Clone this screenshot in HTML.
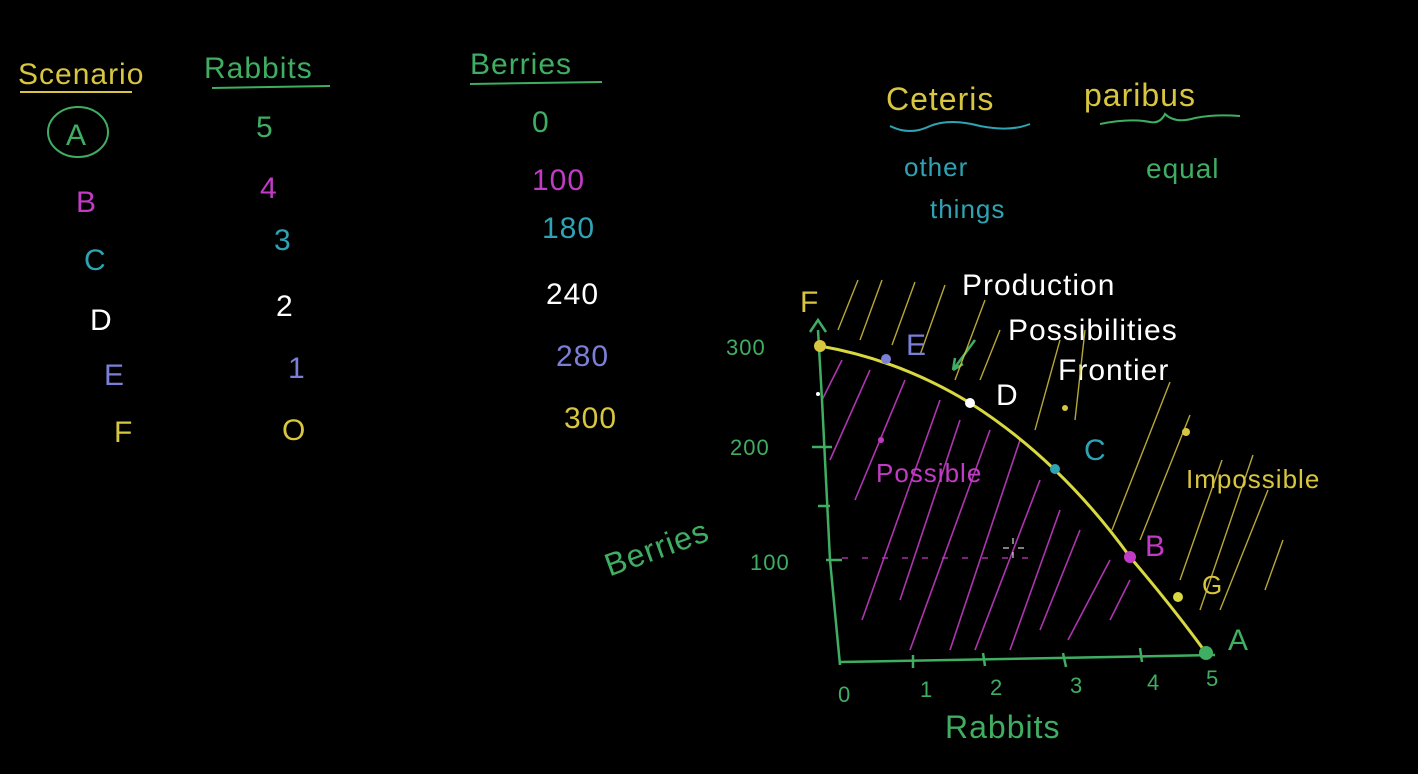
<!DOCTYPE html>
<html><head><meta charset="utf-8"><style>
html,body{margin:0;padding:0;background:#000;width:1418px;height:774px;overflow:hidden}
text{font-family:"Liberation Sans",sans-serif;letter-spacing:1px}
</style></head><body>
<svg width="1418" height="774" viewBox="0 0 1418 774" xmlns="http://www.w3.org/2000/svg">
<rect width="1418" height="774" fill="#000"/>
<g font-size="30">
<text x="18" y="84" fill="#d8c640">Scenario</text>
<line x1="20" y1="92" x2="132" y2="92" stroke="#d8c640" stroke-width="2"/>
<text x="204" y="78" fill="#3fae62">Rabbits</text>
<line x1="212" y1="88" x2="330" y2="86" stroke="#3fae62" stroke-width="2"/>
<text x="470" y="74" fill="#3fae62">Berries</text>
<line x1="470" y1="84" x2="602" y2="82" stroke="#3fae62" stroke-width="2"/>
<ellipse cx="78" cy="132" rx="30" ry="25" fill="none" stroke="#3fae62" stroke-width="2"/>
<text x="66" y="145" fill="#3fae62">A</text>
<text x="256" y="137" fill="#3fae62">5</text>
<text x="532" y="132" fill="#3fae62">0</text>
<text x="76" y="212" fill="#c23bc4">B</text>
<text x="260" y="198" fill="#c23bc4">4</text>
<text x="532" y="190" fill="#c23bc4">100</text>
<text x="84" y="270" fill="#2fa3b3">C</text>
<text x="274" y="250" fill="#2fa3b3">3</text>
<text x="542" y="238" fill="#2fa3b3">180</text>
<text x="90" y="330" fill="#fff">D</text>
<text x="276" y="316" fill="#fff">2</text>
<text x="546" y="304" fill="#fff">240</text>
<text x="104" y="385" fill="#7b7fd6">E</text>
<text x="288" y="378" fill="#7b7fd6">1</text>
<text x="556" y="366" fill="#7b7fd6">280</text>
<text x="114" y="442" fill="#d8c640">F</text>
<text x="282" y="440" fill="#d8c640">O</text>
<text x="564" y="428" fill="#d8c640">300</text>
<text x="886" y="110" fill="#d8c640" font-size="32">Ceteris</text>
<path d="M890 126 q20 10 40 0 q20 -8 50 0 q30 6 50 -2" stroke="#2fa3b3" stroke-width="2" fill="none"/>
<text x="1084" y="106" fill="#d8c640" font-size="32">paribus</text>
<path d="M1100 124 q30 -6 50 -2 q10 2 15 -8 q10 10 30 4 q20 -4 45 -2" stroke="#3fae62" stroke-width="2" fill="none"/>
<text x="904" y="176" fill="#2fa3b3" font-size="26">other</text>
<text x="930" y="218" fill="#2fa3b3" font-size="26">things</text>
<text x="1146" y="178" fill="#3fae62" font-size="28">equal</text>
<text x="962" y="295" fill="#fff">Production</text>
<text x="1008" y="340" fill="#fff">Possibilities</text>
<text x="1058" y="380" fill="#fff">Frontier</text>
<path d="M975 340 l-22 30 M953 370 l2 -12 M953 370 l10 -6" stroke="#3fae62" stroke-width="2.5" fill="none"/>
</g>
<g stroke="#c23bc4" stroke-width="1.6" opacity="0.9">
<line x1="842" y1="360" x2="822" y2="400"/><line x1="870" y1="370" x2="830" y2="460"/>
<line x1="905" y1="380" x2="855" y2="500"/><line x1="940" y1="400" x2="862" y2="620"/>
<line x1="960" y1="420" x2="900" y2="600"/><line x1="990" y1="430" x2="910" y2="650"/>
<line x1="1020" y1="440" x2="950" y2="650"/><line x1="1040" y1="480" x2="975" y2="650"/>
<line x1="1060" y1="510" x2="1010" y2="650"/><line x1="1080" y1="530" x2="1040" y2="630"/>
<line x1="1110" y1="560" x2="1068" y2="640"/><line x1="1130" y1="580" x2="1110" y2="620"/>
</g>
<g stroke="#d8c640" stroke-width="1.4" opacity="0.85">
<line x1="858" y1="280" x2="838" y2="330"/><line x1="882" y1="280" x2="860" y2="340"/>
<line x1="915" y1="282" x2="892" y2="345"/><line x1="945" y1="285" x2="920" y2="355"/>
<line x1="985" y1="300" x2="955" y2="380"/><line x1="1000" y1="330" x2="980" y2="380"/>
<line x1="1060" y1="340" x2="1035" y2="430"/><line x1="1085" y1="330" x2="1075" y2="420"/>
<line x1="1170" y1="382" x2="1112" y2="530"/><line x1="1190" y1="415" x2="1140" y2="540"/>
<line x1="1222" y1="460" x2="1180" y2="580"/><line x1="1253" y1="455" x2="1200" y2="610"/>
<line x1="1268" y1="490" x2="1220" y2="610"/><line x1="1283" y1="540" x2="1265" y2="590"/>
</g>
<g stroke="#3fae62" stroke-width="2.5" fill="none">
<path d="M818 330 L822 400 L830 560 L840 665"/>
<path d="M810 332 L818 320 L826 332"/>
<path d="M840 662 L1215 655"/>
<line x1="812" y1="447" x2="832" y2="447"/><line x1="818" y1="506" x2="830" y2="506"/>
<line x1="826" y1="560" x2="842" y2="560"/>
<line x1="913" y1="655" x2="913" y2="668"/><line x1="983" y1="653" x2="985" y2="666"/>
<line x1="1063" y1="653" x2="1066" y2="667"/><line x1="1140" y1="648" x2="1142" y2="662"/>
</g>
<line x1="842" y1="558" x2="1030" y2="558" stroke="#c23bc4" stroke-width="1.2" stroke-dasharray="6 14"/>
<g fill="#3fae62" font-size="22">
<text x="726" y="355">300</text><text x="730" y="455">200</text><text x="750" y="570">100</text>
<text x="838" y="702">0</text><text x="920" y="697">1</text><text x="990" y="695">2</text>
<text x="1070" y="693">3</text><text x="1147" y="690">4</text><text x="1206" y="686">5</text>
<text x="596" y="560" font-size="32" transform="rotate(-20 650 530)">Berries</text>
<text x="945" y="738" font-size="32">Rabbits</text>
</g>
<path d="M820 346 Q900 360 970 403 Q1060 460 1130 557 Q1175 610 1206 653" stroke="#d8d840" stroke-width="3" fill="none"/>
<circle cx="820" cy="346" r="6" fill="#d8c640"/>
<circle cx="886" cy="359" r="5" fill="#7b7fd6"/>
<circle cx="970" cy="403" r="5" fill="#fff"/>
<circle cx="1055" cy="469" r="5" fill="#2fa3b3"/>
<circle cx="1130" cy="557" r="6" fill="#c23bc4"/>
<circle cx="1178" cy="597" r="5" fill="#d8d840"/>
<circle cx="1206" cy="653" r="7" fill="#3fae62"/>
<circle cx="881" cy="440" r="3" fill="#c23bc4"/>
<circle cx="1065" cy="408" r="3" fill="#d8c640"/>
<circle cx="1186" cy="432" r="4" fill="#d8c640"/>
<circle cx="818" cy="394" r="2" fill="#fff"/>
<g font-size="30">
<text x="800" y="312" fill="#d8c640">F</text>
<text x="906" y="355" fill="#7b7fd6">E</text>
<text x="996" y="405" fill="#fff">D</text>
<text x="1084" y="460" fill="#2fa3b3">C</text>
<text x="1145" y="556" fill="#c23bc4">B</text>
<text x="1202" y="594" fill="#d8c640" font-size="26">G</text>
<text x="1228" y="650" fill="#3fae62">A</text>
<text x="876" y="482" fill="#c23bc4" font-size="26">Possible</text>
<text x="1186" y="488" fill="#d8c640" font-size="26">Impossible</text>
</g>
<path d="M1013 538 v6 M1013 552 v6 M1003 548 h6 M1018 548 h6" stroke="#fff" stroke-width="1"/>
</svg>
</body></html>
